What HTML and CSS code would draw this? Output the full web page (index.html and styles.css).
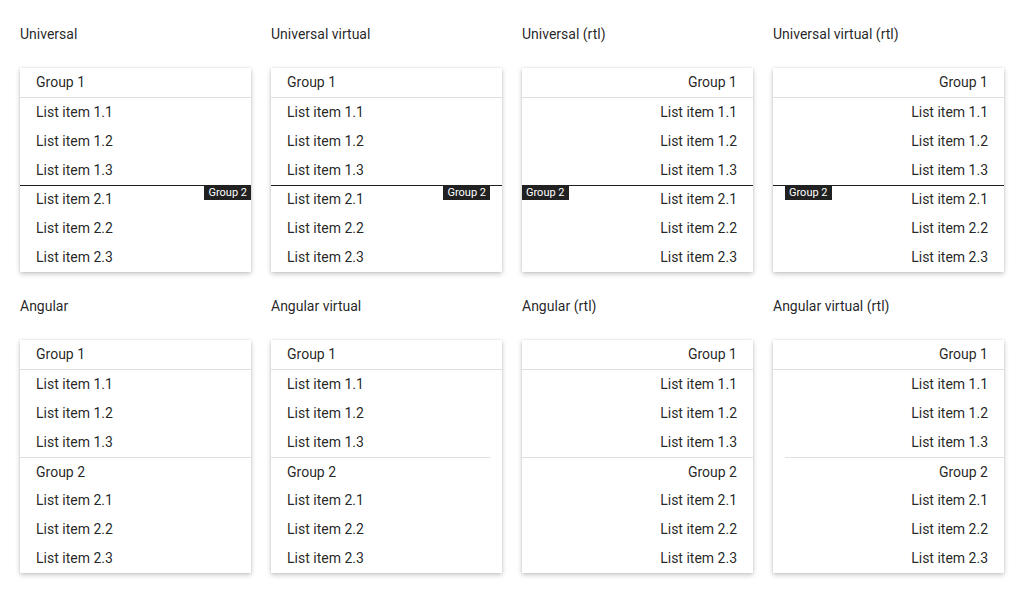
FILE: index.html
```html
<!DOCTYPE html>
<html>
<head>
<meta charset="utf-8">
<link rel="stylesheet" href="styles.css">
</head>
<body>
<div class="grid">
  <section class="demo">
    <h2 class="title">Universal</h2>
    <div class="card">
      <div class="header">Group 1</div>
      <div class="item">List item 1.1</div>
      <div class="item">List item 1.2</div>
      <div class="item">List item 1.3</div>
      <div class="sticky"><span class="line"></span><span class="label">Group 2</span></div>
      <div class="item">List item 2.1</div>
      <div class="item">List item 2.2</div>
      <div class="item">List item 2.3</div>
    </div>
  </section>
  <section class="demo">
    <h2 class="title">Universal virtual</h2>
    <div class="card">
      <div class="header">Group 1</div>
      <div class="item">List item 1.1</div>
      <div class="item">List item 1.2</div>
      <div class="item">List item 1.3</div>
      <div class="sticky virtual"><span class="line"></span><span class="label">Group 2</span></div>
      <div class="item">List item 2.1</div>
      <div class="item">List item 2.2</div>
      <div class="item">List item 2.3</div>
    </div>
  </section>
  <section class="demo rtl">
    <h2 class="title">Universal (rtl)</h2>
    <div class="card">
      <div class="header">Group 1</div>
      <div class="item">List item 1.1</div>
      <div class="item">List item 1.2</div>
      <div class="item">List item 1.3</div>
      <div class="sticky"><span class="line"></span><span class="label">Group 2</span></div>
      <div class="item">List item 2.1</div>
      <div class="item">List item 2.2</div>
      <div class="item">List item 2.3</div>
    </div>
  </section>
  <section class="demo rtl">
    <h2 class="title">Universal virtual (rtl)</h2>
    <div class="card">
      <div class="header">Group 1</div>
      <div class="item">List item 1.1</div>
      <div class="item">List item 1.2</div>
      <div class="item">List item 1.3</div>
      <div class="sticky virtual"><span class="line"></span><span class="label">Group 2</span></div>
      <div class="item">List item 2.1</div>
      <div class="item">List item 2.2</div>
      <div class="item">List item 2.3</div>
    </div>
  </section>

  <section class="demo">
    <h2 class="title">Angular</h2>
    <div class="card">
      <div class="header">Group 1</div>
      <div class="item">List item 1.1</div>
      <div class="item">List item 1.2</div>
      <div class="item">List item 1.3</div>
      <div class="header mid">Group 2</div>
      <div class="item">List item 2.1</div>
      <div class="item">List item 2.2</div>
      <div class="item">List item 2.3</div>
    </div>
  </section>
  <section class="demo">
    <h2 class="title">Angular virtual</h2>
    <div class="card">
      <div class="header">Group 1</div>
      <div class="item">List item 1.1</div>
      <div class="item">List item 1.2</div>
      <div class="item">List item 1.3</div>
      <div class="header mid virtual">Group 2</div>
      <div class="item">List item 2.1</div>
      <div class="item">List item 2.2</div>
      <div class="item">List item 2.3</div>
    </div>
  </section>
  <section class="demo rtl">
    <h2 class="title">Angular (rtl)</h2>
    <div class="card">
      <div class="header">Group 1</div>
      <div class="item">List item 1.1</div>
      <div class="item">List item 1.2</div>
      <div class="item">List item 1.3</div>
      <div class="header mid">Group 2</div>
      <div class="item">List item 2.1</div>
      <div class="item">List item 2.2</div>
      <div class="item">List item 2.3</div>
    </div>
  </section>
  <section class="demo rtl">
    <h2 class="title">Angular virtual (rtl)</h2>
    <div class="card">
      <div class="header">Group 1</div>
      <div class="item">List item 1.1</div>
      <div class="item">List item 1.2</div>
      <div class="item">List item 1.3</div>
      <div class="header mid virtual">Group 2</div>
      <div class="item">List item 2.1</div>
      <div class="item">List item 2.2</div>
      <div class="item">List item 2.3</div>
    </div>
  </section>
</div>
</body>
</html>
```

FILE: styles.css
```css
html, body {
  margin: 0;
  padding: 0;
  background: #fff;
}
body {
  font-family: Roboto, "Liberation Sans", sans-serif;
  font-size: 14px;
  color: rgba(0, 0, 0, 0.87);
}
.grid {
  display: grid;
  grid-template-columns: repeat(4, 1fr);
  column-gap: 20px;
  row-gap: 24px;
  padding: 24px 20px 16px;
}
.demo {
  display: flex;
  flex-direction: column;
  gap: 24px;
}
.rtl {
  direction: rtl;
}
.title {
  margin: 0;
  font-size: 14px;
  font-weight: 400;
  line-height: 20px;
  direction: ltr;
  text-align: left;
}
.card {
  background: #fff;
  box-shadow: 0 2px 5px rgba(0, 0, 0, 0.22), 0 0 2px rgba(0, 0, 0, 0.1);
  display: flex;
  flex-direction: column;
}
.header, .item {
  height: 29px;
  line-height: 29px;
  padding: 0 16px;
  white-space: nowrap;
}
.header {
  border-bottom: 1px solid #e0e0e0;
}
.header.mid {
  border-top: 1px solid #e0e0e0;
  border-bottom: none;
  height: 28px;
  line-height: 28px;
}
.header.mid.virtual {
  border-top: none;
  background-image: linear-gradient(#e0e0e0, #e0e0e0);
  background-repeat: no-repeat;
  background-size: calc(100% - 12px) 1px;
  background-position: left top;
  padding-top: 1px;
}
.rtl .header.mid.virtual {
  background-position: right top;
}
.sticky {
  position: relative;
  height: 0;
}
.sticky .line {
  position: absolute;
  left: 0;
  right: 0;
  top: 0;
  height: 1px;
  background: #212121;
}
.sticky .label {
  position: absolute;
  top: 1px;
  right: 0;
  background: #212121;
  color: #fff;
  font-size: 11px;
  line-height: 14px;
  height: 14px;
  padding: 0 4px;
  direction: ltr;
}
.sticky.virtual .label {
  right: 12px;
}
.rtl .sticky .label {
  right: auto;
  left: 0;
}
.rtl .sticky.virtual .label {
  right: auto;
  left: 12px;
}
```
